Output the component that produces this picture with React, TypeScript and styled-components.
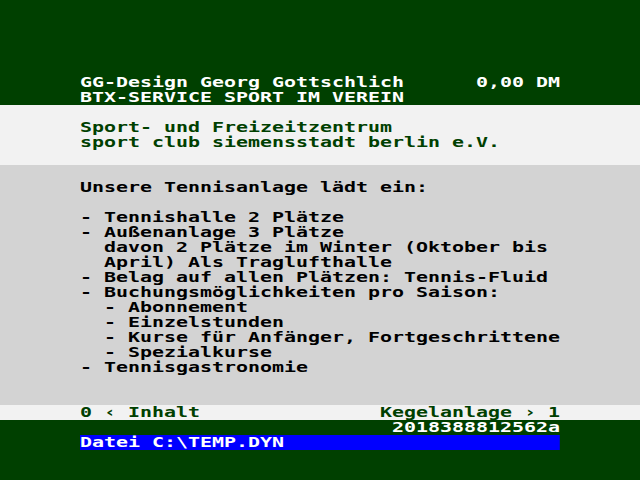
import React from 'react';
import styled, { createGlobalStyle } from 'styled-components';

// BTX page: 40 columns x 15px rows, text area starts at x=80
const ADVANCE = 14 * (1233 / 2048);
const SCALE = 12 / ADVANCE;

const GlobalStyle = createGlobalStyle`
  html, body {
    margin: 0;
    padding: 0;
    background: #004000;
  }
`;

const Screen = styled.div`
  width: 640px;
  height: 480px;
  display: flex;
  flex-direction: column;
  overflow: hidden;
  font-family: "DejaVu Sans Mono", "Liberation Mono", monospace;
  font-weight: bold;
  font-size: 14px;
`;

const Band = styled.div<{ $bg: string; $color: string; $rows: number; $top?: number }>`
  background: ${p => p.$bg};
  color: ${p => p.$color};
  height: ${p => p.$rows * 15}px;
  padding: ${p => (p.$top ?? 0) * 15}px 0 0 80px;
  box-sizing: border-box;
  display: flex;
  flex-direction: column;
`;

const Line = styled.div<{ $bar?: string; $fg?: string }>`
  width: ${40 * ADVANCE}px;
  height: 15px;
  line-height: 15px;
  white-space: pre;
  transform: scaleX(${SCALE});
  transform-origin: left center;
  background: ${p => p.$bar ?? 'transparent'};
  color: ${p => p.$fg ?? 'inherit'};
`;

const body = [
  '',
  'Unsere Tennisanlage lädt ein:',
  '',
  '- Tennishalle 2 Plätze',
  '- Außenanlage 3 Plätze',
  '  davon 2 Plätze im Winter (Oktober bis',
  '  April) Als Traglufthalle',
  '- Belag auf allen Plätzen: Tennis-Fluid',
  '- Buchungsmöglichkeiten pro Saison:',
  '  - Abonnement',
  '  - Einzelstunden',
  '  - Kurse für Anfänger, Fortgeschrittene',
  '  - Spezialkurse',
  '- Tennisgastronomie',
];

export default function App() {
  return (
    <>
      <GlobalStyle />
      <Screen>
        <Band $bg="#004000" $color="#ffffff" $rows={7} $top={5}>
          <Line>{'GG-Design Georg Gottschlich      0,00 DM'}</Line>
          <Line>BTX-SERVICE SPORT IM VEREIN</Line>
        </Band>
        <Band $bg="#f2f2f2" $color="#004000" $rows={4} $top={1}>
          <Line>Sport- und Freizeitzentrum</Line>
          <Line>sport club siemensstadt berlin e.V.</Line>
        </Band>
        <Band $bg="#d3d3d3" $color="#000000" $rows={16}>
          {body.map((t, i) => (
            <Line key={i}>{t}</Line>
          ))}
        </Band>
        <Band $bg="#f2f2f2" $color="#004000" $rows={1}>
          <Line>{'0 \u2039 Inhalt               Kegelanlage \u203a 1'}</Line>
        </Band>
        <Band $bg="#004000" $color="#ffffff" $rows={4}>
          <Line>{'                          2018388812562a'}</Line>
          <Line $bar="#0000ff" $fg="#ffffff">Datei C:\TEMP.DYN</Line>
        </Band>
      </Screen>
    </>
  );
}
